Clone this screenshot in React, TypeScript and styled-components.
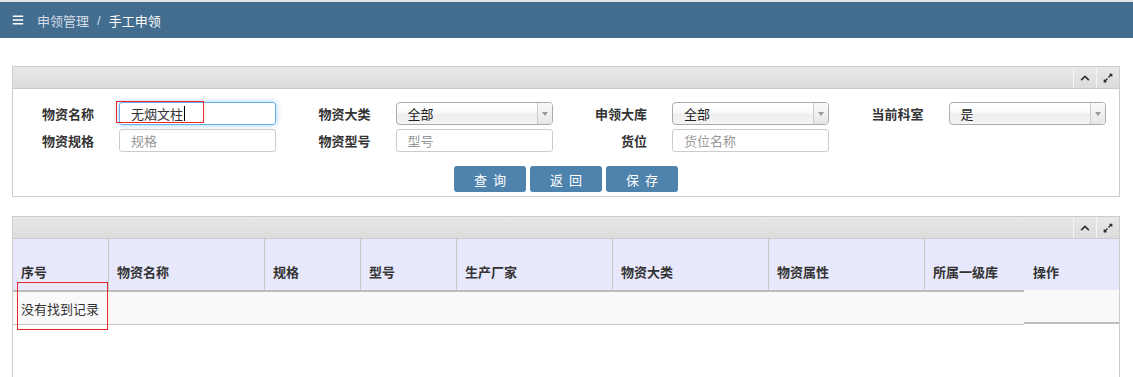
import React from "react";
import styled, { createGlobalStyle } from "styled-components";
import { FaBars, FaChevronUp, FaExpandAlt } from "react-icons/fa";

const GlobalStyle = createGlobalStyle`
    body {
        margin: 0;
        background: #fff;
        color: #333;
        font-family: "Liberation Sans", "Noto Sans CJK SC", sans-serif;
        font-size: 13px;
    }
    * {
        box-sizing: border-box;
    }
`;

const Page = styled.div`
    position: relative;
    width: 1133px;
`;

const TopBar = styled.div`
    display: flex;
    align-items: center;
    height: 38px;
    border-top: 2px solid #e4e4e4;
    background-color: #426d8f;
    padding-left: 12px;
    color: #fff;
`;

const Crumb = styled.span<{ current?: boolean }>`
    font-size: 13px;
    color: ${({ current }) => (current ? "#ffffff" : "#d3dde7")};
`;

const CrumbSep = styled.span`
    color: #d3dde7;
    margin: 0 8px;
`;

const BarIcon = styled.span`
    display: flex;
    margin-right: 13px;
`;

const Content = styled.div`
    padding: 28px 13px 0 12px;
`;

const Panel = styled.div<{ grow?: boolean }>`
    border: 1px solid #ccc;
    margin-bottom: 19px;
    min-height: ${({ grow }) => (grow ? "170px" : "auto")};
    background: #fff;
`;

const PanelHeader = styled.div`
    display: flex;
    justify-content: flex-end;
    height: 22px;
    background: linear-gradient(#e8e8e8, #dcdcdc);
    border-bottom: 1px solid #cbcbcb;
`;

const ToolCell = styled.div`
    display: flex;
    align-items: center;
    justify-content: center;
    width: 23px;
    border-left: 1px solid #f4f4f4;
    color: #2f2f2f;
`;

const FormBody = styled.div`
    padding: 13px 0 4px;
`;

const FieldGrid = styled.div`
    display: grid;
    grid-template-columns: repeat(4, 1fr);
    row-gap: 4px;
`;

const Field = styled.div`
    display: flex;
    align-items: center;
    height: 23px;
`;

const Label = styled.label`
    flex-shrink: 0;
    width: 81px;
    margin-right: 25px;
    text-align: right;
    font-weight: 700;
    color: #333;
`;

const TextBox = styled.div<{ focused?: boolean }>`
    display: flex;
    align-items: center;
    width: 157px;
    height: 23px;
    padding: 0 11px;
    border: 1px solid ${({ focused }) => (focused ? "#66afe9" : "#ccc")};
    border-radius: 3px;
    box-shadow: ${({ focused }) =>
        focused ? "0 0 6px rgba(102, 175, 233, 0.6)" : "none"};
    color: #333;
`;

const Placeholder = styled.span`
    color: #999;
`;

const Caret = styled.span`
    display: inline-block;
    width: 1px;
    height: 15px;
    background: #000;
    margin-left: 1px;
`;

const SelectBox = styled.div`
    display: flex;
    align-items: center;
    width: 157px;
    height: 23px;
    padding-left: 11px;
    border: 1px solid #aaa;
    border-radius: 4px;
    background: linear-gradient(#fff 20%, #f6f6f6 50%, #eee 52%, #f4f4f4 100%);
    color: #222;
    overflow: hidden;
`;

const SelectText = styled.span`
    flex: 1;
`;

const SelectArrow = styled.span`
    display: flex;
    align-items: center;
    justify-content: center;
    width: 15px;
    height: 100%;
    border-left: 1px solid #ccc;
    background: linear-gradient(#fafafa, #e6e6e6);

    &::after {
        content: "";
        border-left: 3px solid transparent;
        border-right: 3px solid transparent;
        border-top: 4px solid #999;
    }
`;

const ButtonRow = styled.div`
    display: flex;
    justify-content: center;
    gap: 4px;
    margin-top: 14px;
`;

const Button = styled.button`
    width: 72px;
    height: 26px;
    border: none;
    border-radius: 3px;
    background-color: #4e83ad;
    color: #fff;
    font-family: inherit;
    font-size: 13px;
    letter-spacing: 6px;
    padding: 0 0 0 6px;
    cursor: pointer;
`;

const TableHead = styled.div`
    display: grid;
    grid-template-columns: 96px 156px 96px 96px 156px 156px 156px 100px 1fr;
    height: 51px;
    background-color: #e8e8fc;
`;

const HeadCell = styled.div<{ noDivider?: boolean }>`
    display: flex;
    align-items: flex-end;
    padding: 0 0 8px 8px;
    border-right: ${({ noDivider }) => (noDivider ? "none" : "1px solid #c6c6c6")};
    font-weight: 700;
    color: #333;
    line-height: 18px;
`;

const BodyRow = styled.div`
    display: flex;
    height: 35px;
`;

const EmptyCell = styled.div`
    flex: 1;
    display: flex;
    align-items: center;
    padding-left: 8px;
    background: #f9f9f9;
    border-top: 2px solid #bdbdbd;
    border-bottom: 1px solid #c6c6c6;
    color: #333;
`;

const FixedCell = styled.div`
    width: 95px;
    background: #f9f9f9;
    border-bottom: 2px solid #bdbdbd;
    margin-bottom: 1px;
`;

const Mark = styled.div<{ x: number; y: number; w: number; h: number }>`
    position: absolute;
    left: ${({ x }) => x}px;
    top: ${({ y }) => y}px;
    width: ${({ w }) => w}px;
    height: ${({ h }) => h}px;
    border: 1px solid #e8262b;
    pointer-events: none;
`;

const PanelTools = () => (
    <PanelHeader>
        <ToolCell>
            <FaChevronUp size={10} />
        </ToolCell>
        <ToolCell>
            <FaExpandAlt size={10} />
        </ToolCell>
    </PanelHeader>
);

const Select = ({ value }: { value: string }) => (
    <SelectBox>
        <SelectText>{value}</SelectText>
        <SelectArrow />
    </SelectBox>
);

const columns = ["序号", "物资名称", "规格", "型号", "生产厂家", "物资大类", "物资属性", "所属一级库", "操作"];

export default function App() {
    return (
        <Page>
            <GlobalStyle />
            <TopBar>
                <BarIcon>
                    <FaBars size={12} />
                </BarIcon>
                <Crumb>申领管理</Crumb>
                <CrumbSep>/</CrumbSep>
                <Crumb current>手工申领</Crumb>
            </TopBar>
            <Content>
                <Panel>
                    <PanelTools />
                    <FormBody>
                        <FieldGrid>
                            <Field>
                                <Label>物资名称</Label>
                                <TextBox focused>
                                    无烟文柱
                                    <Caret />
                                </TextBox>
                            </Field>
                            <Field>
                                <Label>物资大类</Label>
                                <Select value="全部" />
                            </Field>
                            <Field>
                                <Label>申领大库</Label>
                                <Select value="全部" />
                            </Field>
                            <Field>
                                <Label>当前科室</Label>
                                <Select value="是" />
                            </Field>
                            <Field>
                                <Label>物资规格</Label>
                                <TextBox>
                                    <Placeholder>规格</Placeholder>
                                </TextBox>
                            </Field>
                            <Field>
                                <Label>物资型号</Label>
                                <TextBox>
                                    <Placeholder>型号</Placeholder>
                                </TextBox>
                            </Field>
                            <Field>
                                <Label>货位</Label>
                                <TextBox>
                                    <Placeholder>货位名称</Placeholder>
                                </TextBox>
                            </Field>
                        </FieldGrid>
                        <ButtonRow>
                            <Button>查询</Button>
                            <Button>返回</Button>
                            <Button>保存</Button>
                        </ButtonRow>
                    </FormBody>
                </Panel>
                <Panel grow>
                    <PanelTools />
                    <TableHead>
                        {columns.map((c, i) => (
                            <HeadCell key={c} noDivider={i >= columns.length - 2}>
                                {c}
                            </HeadCell>
                        ))}
                    </TableHead>
                    <BodyRow>
                        <EmptyCell>没有找到记录</EmptyCell>
                        <FixedCell />
                    </BodyRow>
                </Panel>
            </Content>
            <Mark x={116} y={101} w={88} h={22} />
            <Mark x={17} y={282} w={91} h={48} />
        </Page>
    );
}
